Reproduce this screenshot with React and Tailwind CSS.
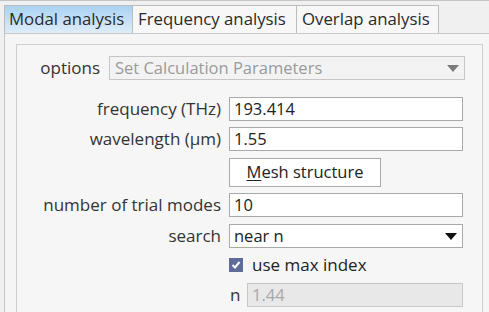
import React from 'react';

const font = { fontFamily: '"Open Sans", "Noto Sans", sans-serif' };

const Arrow = ({ color }) => (
  <svg width="12" height="7" viewBox="0 0 12 7" className="shrink-0">
    <polygon points="0,0 12,0 6,7" fill={color} />
  </svg>
);

const Field = ({ label, value }) => (
  <>
    <div className="text-right text-[17px] leading-6 text-[#333]">{label}</div>
    <div className="h-6 border border-[#a9a9a9] bg-white px-[4px] text-[16.5px] leading-[22px] text-[#222]">
      {value}
    </div>
  </>
);

const App = () => {
  return (
    <div
      className="w-[489px] h-[312px] overflow-hidden bg-[#f0f0f0] border-t border-[#c4c4c4]"
      style={font}
    >
      {/* tabs */}
      <div className="flex pl-[4px] pt-[4px]">
        <div className="h-[28px] w-[129px] border border-b-0 border-[#bcbcbc] bg-gradient-to-b from-[#a9d2f2] to-[#deedf8] pl-[4px] text-[16.8px] leading-[26px] text-[#2a2a2a]">
          Modal analysis
        </div>
        <div className="h-[28px] w-[164px] border border-l-0 border-b-0 border-[#bcbcbc] bg-[#f7f7f7] pl-[5px] text-[16.8px] leading-[26px] text-[#2a2a2a]">
          Frequency analysis
        </div>
        <div className="h-[28px] w-[142px] border border-l-0 border-b-0 border-[#bcbcbc] bg-[#f7f7f7] pl-[5px] text-[16.8px] leading-[26px] text-[#2a2a2a]">
          Overlap analysis
        </div>
      </div>

      {/* panel */}
      <div className="ml-[4px] h-[300px] border-l border-t border-[#c8c8c8] bg-[#f5f5f5] pl-[11px] pt-[10px]">
        <div className="h-[300px] w-[467px] border border-[#cfcfcf] bg-[#f6f6f6] pt-[11px]">
          {/* options */}
          <div className="flex items-center">
            <div className="w-[83px] text-right text-[17px] leading-6 text-[#333]">options</div>
            <div className="ml-[9px] flex h-6 w-[356px] items-center justify-between border border-[#c6c6c6] bg-[#f3f3f3] pl-[5px] pr-[5px]">
              <span className="text-[16.5px] leading-[22px] text-[#9a9a9a]">Set Calculation Parameters</span>
              <Arrow color="#7a7a7a" />
            </div>
          </div>

          <div className="mt-[17px] grid grid-cols-[204px_234px] gap-x-[8px]">
            <Field label="frequency (THz)" value="193.414" />
            <div className="col-span-2 h-[6px]" />
            <Field label="wavelength (μm)" value="1.55" />
            <div className="col-span-2 h-[7px]" />
            <div />
            <div className="flex h-[29px] w-[152px] items-center justify-center border border-[#a9a9a9] bg-white text-[16.5px] text-[#222]">
              <span>
                <span className="underline underline-offset-2">M</span>esh structure
              </span>
            </div>
            <div className="col-span-2 h-[6px]" />
            <Field label="number of trial modes" value="10" />
            <div className="col-span-2 h-[7px]" />
            <div className="text-right text-[17px] leading-6 text-[#333]">search</div>
            <div className="flex h-6 items-center justify-between border border-[#a9a9a9] bg-white pl-[4px] pr-[5px]">
              <span className="text-[16.5px] leading-[22px] text-[#222]">near n</span>
              <Arrow color="#111" />
            </div>
            <div className="col-span-2 h-[5px]" />
            <div />
            <div className="flex h-6 items-center">
              <div className="flex h-[14px] w-[14px] items-center justify-center bg-[#5d6c9b]">
                <svg width="10" height="10" viewBox="0 0 10 10">
                  <polyline points="1.5,5 4,7.5 8.5,2" fill="none" stroke="white" strokeWidth="2" />
                </svg>
              </div>
              <span className="ml-[9px] text-[17px] leading-6 text-[#222]">use max index</span>
            </div>
            <div className="col-span-2 h-[6px]" />
            <div />
            <div className="flex items-center">
              <span className="w-[18px] pl-[1px] text-[17px] leading-6 text-[#333]">n</span>
              <div className="h-6 flex-1 border border-[#c8c8c8] bg-[#e8e8e8] px-[4px] text-[16.5px] leading-[22px] text-[#a8a8a8]">
                1.44
              </div>
            </div>
          </div>
        </div>
      </div>
    </div>
  );
};

export default App;
